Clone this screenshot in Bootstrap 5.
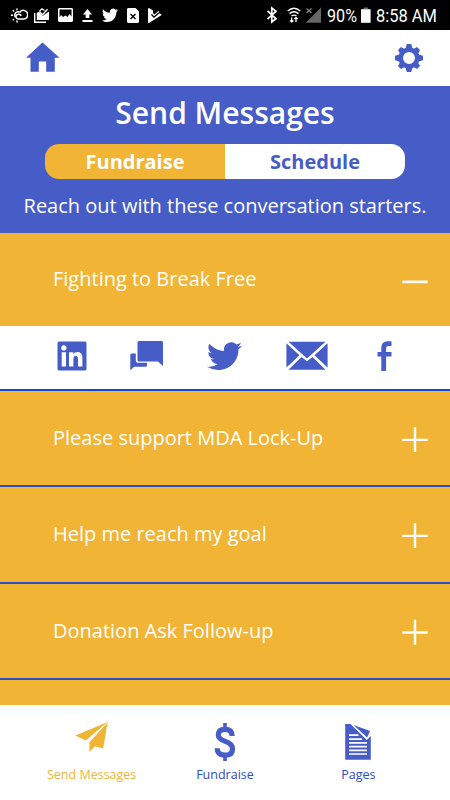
<!DOCTYPE html>
<html lang="en">
<head>
<meta charset="utf-8">
<meta name="viewport" content="width=device-width, initial-scale=1">
<title>Send Messages</title>
<link href="https://cdn.jsdelivr.net/npm/bootstrap@5.3.0/dist/css/bootstrap.min.css" rel="stylesheet">
<style>
:root { --brand: #465cc6; --gold: #f1b434; --rule: #2b50c0; }
body { font-family: "Open Sans", "Noto Sans", sans-serif; }
svg { display: block; flex: none; }
.screen { width: 450px; height: 800px; }
.statusbar { height: 30px; padding: 0 8px 0 11px; }
.status-left { gap: 9px; }
.status-left .weather { margin-right: -3px; }
.topnav { height: 56px; padding: 0 27px 0 26px; color: var(--brand); }
.home { margin-bottom: 2px; }
.hero { height: 147px; background: var(--brand); padding-top: 5px; }
.hero-title { font-size: 30px; line-height: 44px; font-weight: 600; }
.switch { width: 360px; height: 35px; margin-top: 9px; border-radius: 14px; }
.switch .btn { --bs-btn-color: var(--brand); --bs-btn-bg: #fff; --bs-btn-active-bg: var(--gold); --bs-btn-active-color: #fff; font-size: 20px; line-height: 35px; font-weight: 700; border: 0; }
.hero-sub { font-size: 20px; line-height: 30px; margin-top: 12px; }
.topics { height: 472px; }
.topic { height: 96.3px; flex: none; background: var(--gold); border-bottom: 2px solid var(--rule); padding: 0 22px 0 53px; font-size: 20px; }
.topic.open { height: 93px; border: 0; }
.topic.open span { margin-bottom: 1px; }
.share { height: 65px; flex: none; border-bottom: 2px solid #1149c8; color: var(--brand); padding: 15px 58px 0 57px; }
.share-chat { margin-left: 43px; }
.share-tweet { margin-left: 44px; }
.share-mail { margin-left: 44px; }
.share-fb { margin-left: 49px; }
.tabs { height: 95px; padding: 0 25px; font-size: 12.5px; line-height: 18px; color: #3049c4; }
.tabs a { padding-top: 14px; color: inherit; }
.tabs a.current { color: var(--gold); }
.tabs svg { height: 42px; margin-bottom: 5px; }
</style>
</head>
<body>
<svg width="0" height="0" class="position-absolute" aria-hidden="true">
  <symbol id="bird" viewBox="0 1.3 24 20.5" preserveAspectRatio="none"><path fill="currentColor" d="M23.953 4.57a10 10 0 01-2.825.775 4.958 4.958 0 002.163-2.723c-.951.555-2.005.959-3.127 1.184a4.92 4.92 0 00-8.384 4.482C7.69 8.095 4.067 6.13 1.64 3.162a4.822 4.822 0 00-.666 2.475c0 1.71.87 3.213 2.188 4.096a4.904 4.904 0 01-2.228-.616v.06a4.923 4.923 0 003.946 4.827 4.996 4.996 0 01-2.212.085 4.936 4.936 0 004.604 3.417 9.867 9.867 0 01-6.102 2.105c-.39 0-.779-.023-1.17-.067a13.995 13.995 0 007.557 2.209c9.053 0 13.998-7.496 13.998-13.985 0-.21 0-.42-.015-.63A9.935 9.935 0 0024 4.59z"/></symbol>
</svg>
<div class="screen d-flex flex-column overflow-hidden bg-white">
  <div class="statusbar d-flex align-items-center justify-content-between bg-black text-white">
    <div class="status-left d-flex align-items-center">
      <svg class="weather" width="17" height="15" viewBox="11 7.500 17 15" fill="none" stroke="#fff" stroke-width="1.500"><path d="M19.500 11.500a3.400 3.400 0 0 0-4 5.200"/><path d="M18.500 18.500a2.400 2.400 0 1 1 .6-4.700q1.400.2 2.200 1.600M18 18.500h5.500a4.300 4.300 0 1 0-3.900-6.300"/><path d="M17 8v1.800M12.800 9.800l1.200 1.200M11 14.800h2M12.800 19.800l1.200-1.200M17 20v2"/></svg>
      <svg width="15" height="15" viewBox="0 0 15 15"><path d="M.7 5v9.200H12" fill="none" stroke="#fff" stroke-width="1.400"/><path fill="#fff" d="M2.800 5 5 3.500 8.500 8 15 3.500V12H2.800z"/><path d="m5.500 3.500 3 3.200 5-5.500M5.500 3 8 .8l2.500 1.700" stroke="#fff" stroke-width="1.300" fill="none"/></svg>
      <svg width="15" height="14" viewBox="0 0 15 14"><path fill="#fff" fill-rule="evenodd" d="M1 0h13l1 1v12l-1 1H1l-1-1V1zM1.500 1.500v8l1.500-2.500 2 2 2.500-1.500 2 1.500 2-3 2 2.500V1.500z"/></svg>
      <svg width="11" height="13" viewBox="0 0 12 13" preserveAspectRatio="none"><path fill="#fff" d="M6 0l5 5.500H8V9H4V5.500H1zM.5 11h11v2H.5z"/></svg>
      <svg width="16" height="14"><use href="#bird"/></svg>
      <svg width="12" height="15" viewBox="0 0 12 15"><path fill="#fff" d="M1 0h7.500L12 3.500V14l-1 1H1l-1-1V1z"/><path d="m3.500 6 5 5m0-5-5 5" stroke="#000" stroke-width="1.400"/></svg>
      <svg width="14" height="15" viewBox="0 0 14 15"><path fill="#fff" d="M0 .5 1 0l4 2.500V5l1.500 1.500L11 2.500V5l2.500 1.500-.2.800L1 15l-1-.5z"/><path d="m3.500 6.500 2.500 2.700 5-4.500" stroke="#000" stroke-width="1.300" fill="none"/></svg>
    </div>
    <svg width="176" height="30" viewBox="266 0 176 30">
      <path d="m267.500 10.800 8.500 8-4.200 3.200V8l4.200 3.200-8.500 8" fill="none" stroke="#fff" stroke-width="1.700"/>
      <g fill="none" stroke="#fff" stroke-width="1.400"><path d="M287.700 11q6.300-5.500 12.600 0M289.500 13.600q4.500-3.600 9 0M291.500 16q2.500-1.800 5 0"/><path d="M291.700 17.500v4.500m-1.700-1.500 1.700 1.500 1.700-1.500M296 22v-4.500m-1.700 1.500 1.700-1.500 1.700 1.500" stroke-width="1.300"/></g>
      <path d="M321 7.500v15.300h-15.300z" fill="#666"/><path d="m306.500 8.500 5 4.500m0-4.500-5 4.500" stroke="#888" stroke-width="1.200"/>
      <g fill="#fff" font-family="Roboto, sans-serif" font-size="18.500"><text transform="translate(327 22) scale(.86 1)" textLength="34.900" lengthAdjust="spacingAndGlyphs">90%</text><text transform="translate(376 22) scale(.86 1)" textLength="70.900" lengthAdjust="spacingAndGlyphs">8:58 AM</text></g>
      <path d="M363.500 7.500h4.500v1.500h-4.500z" fill="#666"/><path d="M361 9.200h9.600v13.600H361z" fill="#fff"/>
    </svg>
  </div>

  <nav class="topnav d-flex align-items-center justify-content-between">
    <svg class="home" width="34" height="30" viewBox="0 0 34 30" fill="currentColor" role="img" aria-label="Home"><path d="M16.500.500 33.500 15.800H28.800V29.800h-8.600V19.500h-7.400v10.300H4.500V15.800H0z"/></svg>
    <svg width="28" height="28" viewBox="-14 -14 28 28" fill="none" role="img" aria-label="Settings"><circle r="8.300" stroke="currentColor" stroke-width="4.600"/><g fill="currentColor"><path id="cog" d="M-3.500-9.500-2.200-14H2.200L3.500-9.500zM-3.500 9.500-2.200 14H2.200L3.500 9.500zM-9.500-3.500-14-2.200V2.200L-9.500 3.500zM9.500-3.500 14-2.200V2.200L9.500 3.500z"/><use href="#cog" transform="rotate(45) scale(.96)"/></g></svg>
  </nav>

  <header class="hero text-white d-flex flex-column align-items-center text-nowrap">
    <h1 class="hero-title m-0">Send Messages</h1>
    <div class="switch d-flex overflow-hidden">
      <button class="btn active rounded-0 w-50 p-0">Fundraise</button>
      <button class="btn rounded-0 w-50 p-0">Schedule</button>
    </div>
    <p class="hero-sub mb-0">Reach out with these conversation starters.</p>
  </header>

  <main class="topics d-flex flex-column overflow-hidden text-white">
    <div class="topic open d-flex align-items-center justify-content-between"><span>Fighting to Break Free</span><svg width="26" height="26" stroke="#fff" stroke-width="2.700"><path d="M.3 14.900h25.400"/></svg></div>
    <div class="share d-flex">
      <svg width="30" height="30" viewBox="0 0 30 30" fill="currentColor"><path fill-rule="evenodd" d="M2 .5h26q1.500 0 1.500 1.500v26q0 1.500-1.500 1.500H2Q.5 29.500.5 28V2Q.5.500 2 .500zM4.700 11.200v14.200H9V11.200zM6.900 4.300a2.600 2.600 0 1 0 0 5.200 2.600 2.600 0 0 0 0-5.200zM12 11.200v14.200h4.400v-7.300c0-4.500 4.600-4.400 4.600-.3v7.600h4.400v-9c0-6.200-6.900-7-9.100-3.200v-2z"/></svg>
      <svg class="share-chat" width="33" height="30" viewBox="0 0 33 30" fill="currentColor"><path d="M9 0h22.500Q33 0 33 1.500V25l-5-4.500H9Q7.500 20.500 7.500 19V1.500Q7.500 0 9 0zM1.500 12.500h4.300v7.300q0 2 2 2H17v2.500q0 1.500-1.500 1.500H4L.3 29.500V14q0-1.500 1.200-1.500z"/></svg>
      <svg class="share-tweet" width="35" height="29"><use href="#bird"/></svg>
      <svg class="share-mail" width="42" height="30" viewBox="0 0 42 30" fill="currentColor"><path d="M2.500.800h37L21 17.500zM.4 2.300 13.500 14.200.4 26.500zM41.600 2.300 28.500 14.200l13.100 12.300zM2.500 28.700 15.500 16l5.500 4.300L26.500 16l13 12.700z"/></svg>
      <svg class="share-fb" width="15" height="30" viewBox="0 0 15 30" fill="currentColor"><path d="M4.300 30V15.500H.500v-4.500h3.800V7Q4.300.300 10.500.300H14.500v4.800h-3q-2.400 0-2.400 2.200v3.700h5.400v4.500H9.100V30z"/></svg>
    </div>
    <div class="topic d-flex align-items-center justify-content-between"><span>Please support MDA Lock-Up</span><svg width="26" height="28" stroke="#fff" stroke-width="2.400"><path d="M.3 15.900h25.400M13 3.200v24.800"/></svg></div>
    <div class="topic d-flex align-items-center justify-content-between"><span>Help me reach my goal</span><svg width="26" height="28" stroke="#fff" stroke-width="2.400"><path d="M.3 15.900h25.400M13 3.200v24.800"/></svg></div>
    <div class="topic d-flex align-items-center justify-content-between"><span>Donation Ask Follow-up</span><svg width="26" height="28" stroke="#fff" stroke-width="2.400"><path d="M.3 15.500h25.400M13 2.800v25"/></svg></div>
    <div class="topic"></div>
  </main>

  <footer class="tabs d-flex text-center">
    <a class="current col-4 text-decoration-none d-flex flex-column align-items-center" href="#"><svg width="34" viewBox="75 719 34 42" fill="currentColor"><path d="M107.500 722 75.500 735.500l10.300 5zM107.500 722.500 89.500 742.300v9.700l5.500-5.800 8.200 2.400z"/></svg>Send Messages</a>
    <a class="col-4 text-decoration-none d-flex flex-column align-items-center" href="#"><svg width="22" viewBox="214.500 719 22 42" fill="none" stroke="var(--brand)" stroke-width="5.200"><path d="M232.600 736q0-6.700-7.100-6.700-6.700 0-6.700 5.500 0 4.200 7 6.600 7.200 2.400 7.200 7.500 0 6.300-7.500 6.300-7.800 0-7.800-7"/><path stroke-width="3.600" d="M225.500 723v5M225.500 756v5"/></svg>Fundraise</a>
    <a class="col-4 text-decoration-none d-flex flex-column align-items-center" href="#"><svg width="26" viewBox="345 719 26 42"><path fill="var(--brand)" d="M345.200 724h5.300l16.200 16 4.100-4v23.800h-25.600z"/><path fill="var(--brand)" d="m353.500 725 16.500 6-2.800 6.500z"/><path stroke="#fff" stroke-width="1.700" d="M349 735.200h9.500M349 739.200h13M349 742.900h18M349 746.600h18M349 750.300h18M349 754h18"/></svg>Pages</a>
  </footer>
</div>
<script src="https://cdn.jsdelivr.net/npm/bootstrap@5.3.0/dist/js/bootstrap.bundle.min.js"></script>
</body>
</html>
